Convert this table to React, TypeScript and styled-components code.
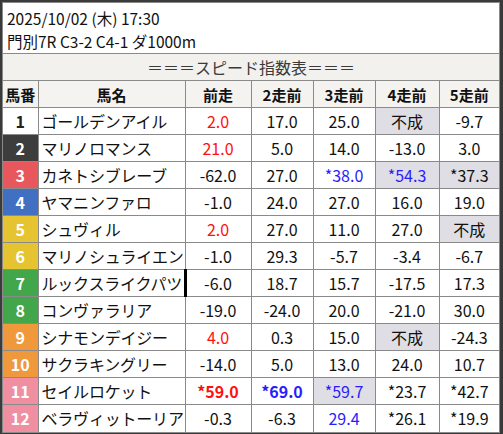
import React from 'react';
import styled, { createGlobalStyle } from 'styled-components';

const GlobalStyle = createGlobalStyle`
  html, body {
    margin: 0;
    padding: 0;
    background: #3a3a3a;
  }
  body {
    font-family: "Noto Sans CJK JP", "Noto Sans", sans-serif;
  }
`;

type Tone = 'red' | 'blue' | 'plain';

interface Score {
  v: string;
  tone?: Tone;
  bold?: boolean;
  gray?: boolean;
}

interface Horse {
  no: number;
  name: string;
  scores: Score[];
}

// waku colours by horse number
const wakuColor: Record<number, { bg: string; fg: string }> = {
  1: { bg: '#ffffff', fg: '#222' },
  2: { bg: '#3d3d3d', fg: '#fff' },
  3: { bg: '#e8575b', fg: '#fff' },
  4: { bg: '#4170c2', fg: '#fff' },
  5: { bg: '#e6c431', fg: '#fff' },
  6: { bg: '#e6c431', fg: '#fff' },
  7: { bg: '#42a64b', fg: '#fff' },
  8: { bg: '#42a64b', fg: '#fff' },
  9: { bg: '#ef993c', fg: '#fff' },
  10: { bg: '#ef993c', fg: '#fff' },
  11: { bg: '#f08fa1', fg: '#fff' },
  12: { bg: '#f08fa1', fg: '#fff' },
};

const s = (v: string, extra: Partial<Score> = {}): Score => ({ v, ...extra });

const horses: Horse[] = [
  { no: 1, name: 'ゴールデンアイル', scores: [s('2.0', { tone: 'red' }), s('17.0'), s('25.0'), s('不成', { gray: true }), s('-9.7')] },
  { no: 2, name: 'マリノロマンス', scores: [s('21.0', { tone: 'red' }), s('5.0'), s('14.0'), s('-13.0'), s('3.0')] },
  { no: 3, name: 'カネトシブレーブ', scores: [s('-62.0'), s('27.0'), s('*38.0', { tone: 'blue' }), s('*54.3', { tone: 'blue', gray: true }), s('*37.3', { gray: true })] },
  { no: 4, name: 'ヤマニンファロ', scores: [s('-1.0'), s('24.0'), s('27.0'), s('16.0'), s('19.0')] },
  { no: 5, name: 'シュヴィル', scores: [s('2.0', { tone: 'red' }), s('27.0'), s('11.0'), s('27.0'), s('不成', { gray: true })] },
  { no: 6, name: 'マリノシュライエン', scores: [s('-1.0'), s('29.3'), s('-5.7'), s('-3.4'), s('-6.7')] },
  { no: 7, name: 'ルックスライクパツ', scores: [s('-6.0'), s('18.7'), s('15.7'), s('-17.5'), s('17.3')] },
  { no: 8, name: 'コンヴァラリア', scores: [s('-19.0'), s('-24.0'), s('20.0'), s('-21.0'), s('30.0')] },
  { no: 9, name: 'シナモンデイジー', scores: [s('4.0', { tone: 'red' }), s('0.3'), s('15.0'), s('不成', { gray: true }), s('-24.3')] },
  { no: 10, name: 'サクラキングリー', scores: [s('-14.0'), s('5.0'), s('13.0'), s('24.0'), s('10.7')] },
  { no: 11, name: 'セイルロケット', scores: [s('*59.0', { tone: 'red', bold: true }), s('*69.0', { tone: 'blue', bold: true }), s('*59.7', { tone: 'blue', gray: true }), s('*23.7'), s('*42.7')] },
  { no: 12, name: 'ベラヴィットーリア', scores: [s('-0.3'), s('-6.3'), s('29.4', { tone: 'blue' }), s('*26.1'), s('*19.9')] },
];

const headers = ['馬番', '馬名', '前走', '2走前', '3走前', '4走前', '5走前'];
const colWidths = [35, 147, 66, 62, 62, 64, 60];

const toneColor: Record<Tone, string> = {
  red: '#ff1010',
  blue: '#2a1cff',
  plain: '#111',
};

const Panel = styled.div`
  box-sizing: border-box;
  width: 498px;
  margin: 2px 0 0 2px;
  background: #fff;
  border: 1px solid #8a8a8a;
`;

const RaceInfo = styled.div`
  box-sizing: border-box;
  height: 51px;
  padding: 4px 0 0 4px;
  border-bottom: 1px solid #8a8a8a;
  color: #111;
  font-size: 15.5px;
  line-height: 23px;
`;

const Table = styled.table`
  width: 496px;
  table-layout: fixed;
  border-collapse: collapse;
  border-style: hidden;
  font-size: 16px;
  color: #111;
`;

const TitleCell = styled.td`
  height: 26px;
  padding: 0;
  background: #f2f1ed;
  border: 1px solid #8a8a8a;
  text-align: center;
  color: #3a3a3a;
  line-height: 26px;
`;

const HeadCell = styled.th`
  height: 26px;
  padding: 0;
  background: #f4f3ef;
  border: 1px solid #8a8a8a;
  font-size: 15px;
  font-weight: 700;
  text-align: center;
  white-space: nowrap;
`;

const Row = styled.tr`
  height: 27px;
`;

const NumCell = styled.td<{ $bg: string; $fg: string }>`
  padding: 0;
  background: ${p => p.$bg};
  color: ${p => p.$fg};
  border: 1px solid #8a8a8a;
  font-size: 16px;
  font-weight: 700;
  text-align: center;
`;

const NameCell = styled.td`
  padding: 0 0 0 3px;
  border: 1px solid #8a8a8a;
  white-space: nowrap;
  overflow: hidden;
  letter-spacing: -0.2px;
`;

const ScoreCell = styled.td<{ $tone: Tone; $bold?: boolean; $gray?: boolean; $mark?: boolean }>`
  position: relative;
  padding: 0;
  border: 1px solid #8a8a8a;
  text-align: center;
  white-space: nowrap;
  color: ${p => toneColor[p.$tone]};
  font-weight: ${p => (p.$bold ? 700 : 400)};
  background: ${p => (p.$gray ? '#dedee4' : 'transparent')};

  &::before {
    content: '';
    display: ${p => (p.$mark ? 'block' : 'none')};
    position: absolute;
    left: -2px;
    top: -1px;
    bottom: -1px;
    width: 3px;
    background: #000;
  }
`;

export default function App() {
  return (
    <>
      <GlobalStyle />
      <Panel>
        <RaceInfo>
          <div>2025/10/02 (木) 17:30</div>
          <div>門別7R C3-2 C4-1 ダ1000m</div>
        </RaceInfo>
        <Table>
          <colgroup>
            {colWidths.map((w, i) => (
              <col key={i} style={{ width: w }} />
            ))}
          </colgroup>
          <tbody>
            <tr>
              <TitleCell colSpan={7}>＝＝＝スピード指数表＝＝＝</TitleCell>
            </tr>
            <tr>
              {headers.map(h => (
                <HeadCell key={h}>{h}</HeadCell>
              ))}
            </tr>
            {horses.map(h => (
              <Row key={h.no}>
                <NumCell $bg={wakuColor[h.no].bg} $fg={wakuColor[h.no].fg}>{h.no}</NumCell>
                <NameCell>{h.name}</NameCell>
                {h.scores.map((sc, i) => (
                  <ScoreCell
                    key={i}
                    $tone={sc.tone ?? 'plain'}
                    $bold={sc.bold}
                    $gray={sc.gray}
                    $mark={h.no === 7 && i === 0}
                  >
                    {sc.v}
                  </ScoreCell>
                ))}
              </Row>
            ))}
          </tbody>
        </Table>
      </Panel>
    </>
  );
}
